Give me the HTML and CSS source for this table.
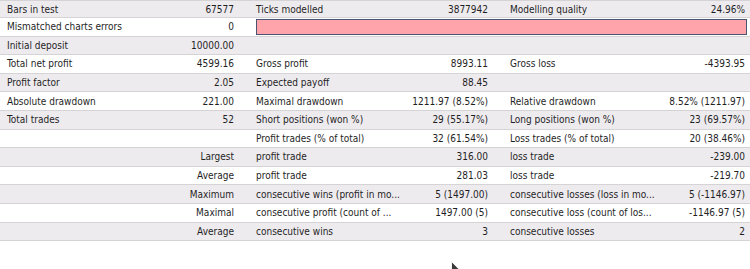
FILE: index.html
```html
<!DOCTYPE html>
<html>
<head>
<meta charset="utf-8">
<link rel="stylesheet" href="styles.css">
</head>
<body>
<div class="report">
  <div class="row first">
    <div class="lbl">Bars in test</div><div class="val v1">67577</div>
    <div class="lbl l2">Ticks modelled</div><div class="val v2">3877942</div>
    <div class="lbl l3">Modelling quality</div><div class="val v3">24.96%</div>
  </div>
  <div class="row">
    <div class="lbl">Mismatched charts errors</div><div class="val v1">0</div>
    <div class="barcell"><div class="bar"></div></div>
  </div>
  <div class="row">
    <div class="lbl">Initial deposit</div><div class="val v1">10000.00</div>
  </div>
  <div class="row">
    <div class="lbl">Total net profit</div><div class="val v1">4599.16</div>
    <div class="lbl l2">Gross profit</div><div class="val v2">8993.11</div>
    <div class="lbl l3">Gross loss</div><div class="val v3">-4393.95</div>
  </div>
  <div class="row">
    <div class="lbl">Profit factor</div><div class="val v1">2.05</div>
    <div class="lbl l2">Expected payoff</div><div class="val v2">88.45</div>
  </div>
  <div class="row">
    <div class="lbl">Absolute drawdown</div><div class="val v1">221.00</div>
    <div class="lbl l2">Maximal drawdown</div><div class="val v2">1211.97 (8.52%)</div>
    <div class="lbl l3">Relative drawdown</div><div class="val v3">8.52% (1211.97)</div>
  </div>
  <div class="row">
    <div class="lbl">Total trades</div><div class="val v1">52</div>
    <div class="lbl l2">Short positions (won %)</div><div class="val v2">29 (55.17%)</div>
    <div class="lbl l3">Long positions (won %)</div><div class="val v3">23 (69.57%)</div>
  </div>
  <div class="row">
    <div class="lbl"></div><div class="val v1"></div>
    <div class="lbl l2">Profit trades (% of total)</div><div class="val v2">32 (61.54%)</div>
    <div class="lbl l3">Loss trades (% of total)</div><div class="val v3">20 (38.46%)</div>
  </div>
  <div class="row">
    <div class="group">Largest</div>
    <div class="lbl l2">profit trade</div><div class="val v2">316.00</div>
    <div class="lbl l3">loss trade</div><div class="val v3">-239.00</div>
  </div>
  <div class="row">
    <div class="group">Average</div>
    <div class="lbl l2">profit trade</div><div class="val v2">281.03</div>
    <div class="lbl l3">loss trade</div><div class="val v3">-219.70</div>
  </div>
  <div class="row">
    <div class="group">Maximum</div>
    <div class="lbl l2">consecutive wins (profit in mo...</div><div class="val v2">5 (1497.00)</div>
    <div class="lbl l3">consecutive losses (loss in mo...</div><div class="val v3">5 (-1146.97)</div>
  </div>
  <div class="row">
    <div class="group">Maximal</div>
    <div class="lbl l2">consecutive profit (count of ...</div><div class="val v2">1497.00 (5)</div>
    <div class="lbl l3">consecutive loss (count of los...</div><div class="val v3">-1146.97 (5)</div>
  </div>
  <div class="row">
    <div class="group">Average</div>
    <div class="lbl l2">consecutive wins</div><div class="val v2">3</div>
    <div class="lbl l3">consecutive losses</div><div class="val v3">2</div>
  </div>
</div>
<svg class="cursor" width="12" height="19" viewBox="0 0 12 19">
  <path d="M0.5 0.5 L0.5 16 L4.3 12.4 L6.8 18 L8.8 17.1 L6.4 11.6 L11.3 11.6 Z" fill="#3a3a3a" stroke="#f4f4f4" stroke-width="1"/>
</svg>
</body>
</html>
```
FILE: styles.css
```css
html, body {
  margin: 0;
  padding: 0;
  background: #ffffff;
}
body {
  width: 750px;
  height: 269px;
  overflow: hidden;
  position: relative;
  font-family: "DejaVu Sans Condensed", "DejaVu Sans", sans-serif;
  font-size: 10px;
  color: #1f1f1f;
}
.report {
  border-top: 1px solid #d6d3d6;
}
.row {
  display: grid;
  grid-template-columns: 160px 89px 156px 98px 157px 90px;
  height: 18.6px;
  box-sizing: border-box;
  border-bottom: 1px solid #d6d3d6;
  align-items: center;
  background: #ffffff;
  white-space: nowrap;
}
.row:nth-child(odd) {
  background: #eeebef;
}
.row.first {
  height: 17px;
}
.lbl {
  padding-left: 7px;
  overflow: hidden;
}
.val {
  text-align: right;
}
.v1 { grid-column: 2; padding-right: 15px; }
.l2 { grid-column: 3; }
.v2 { grid-column: 4; padding-right: 15px; }
.l3 { grid-column: 5; }
.v3 { grid-column: 6; padding-right: 5px; }
.group {
  grid-column: 1 / 3;
  text-align: right;
  padding-right: 15px;
}
.barcell {
  grid-column: 3 / 7;
  padding-left: 7px;
  padding-right: 3px;
  height: 100%;
  display: flex;
  align-items: center;
}
.bar {
  flex: 1;
  height: 16px;
  box-sizing: border-box;
  background: #ffa4aa;
  border: 1px solid #4a5470;
}
.cursor {
  position: absolute;
  left: 451px;
  top: 261px;
}
```
